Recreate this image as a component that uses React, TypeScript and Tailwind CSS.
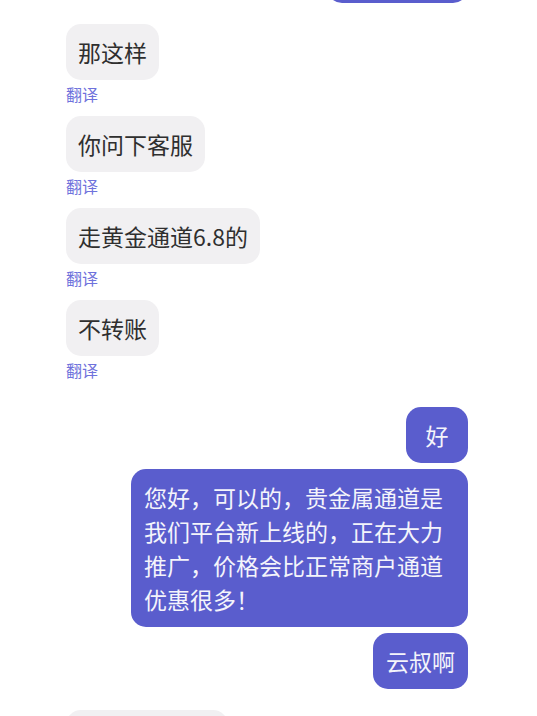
import React from 'react';

type Msg = { from: 'them' | 'me'; text: string };

const messages: Msg[] = [
  { from: 'me', text: '好的，明白' },
  { from: 'them', text: '那这样' },
  { from: 'them', text: '你问下客服' },
  { from: 'them', text: '走黄金通道6.8的' },
  { from: 'them', text: '不转账' },
  { from: 'me', text: '好' },
  {
    from: 'me',
    text: '您好，可以的，贵金属通道是我们平台新上线的，正在大力推广，价格会比正常商户通道优惠很多！',
  },
  { from: 'me', text: '云叔啊' },
  { from: 'them', text: '那我再问一下' },
];

export default function App() {
  return (
    <div
      className="h-[716px] w-[537px] overflow-hidden bg-white"
      style={{ fontFamily: '"Noto Sans CJK SC", "Noto Sans", sans-serif' }}
    >
      <div className="mt-[-53px] flex flex-col pl-[66px] pr-[69px]">
        {messages.map((m, i) => {
          const prev = messages[i - 1];
          if (m.from === 'them') {
            return (
              <div key={i} className={prev && prev.from === 'me' ? 'mt-[21px]' : ''}>
                <div className="inline-block rounded-[15px] bg-[#f1f0f2] px-3 py-[11px] text-[23px] leading-[34px] text-[#2f2f2f]">
                  {m.text}
                </div>
                <div className="mt-[4px] mb-[12px] text-[16px] leading-[20px] text-[#6f72dc]">翻译</div>
              </div>
            );
          }
          return (
            <div
              key={i}
              className={
                'flex justify-end ' +
                (prev && prev.from === 'me' ? 'mt-[6px]' : prev ? 'mt-[15px]' : '')
              }
            >
              <div className="min-w-[62px] max-w-[337px] rounded-[15px] bg-[#5a5dcd] px-[13px] py-[11px] text-center text-[23px] leading-[34px] text-[#f4f4fb]">
                <span className="inline-block text-left">{m.text}</span>
              </div>
            </div>
          );
        })}
      </div>
    </div>
  );
}
